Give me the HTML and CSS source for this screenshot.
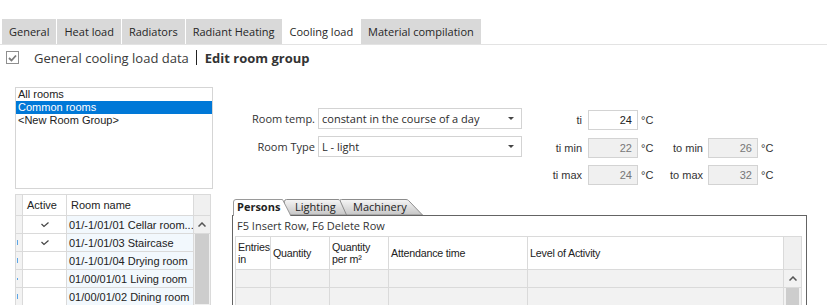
FILE: index.html
```html
<!DOCTYPE html>
<html lang="en">
  <head>
    <meta charset="UTF-8" />
    <meta name="viewport" content="width=device-width, initial-scale=1.0" />
    <title>Cooling load</title>
    <link rel="stylesheet" href="styles.css">
  </head>
  <body>
    <div class="top-tabs">
      <div class="top-tab">General</div>
      <div class="top-tab">Heat load</div>
      <div class="top-tab">Radiators</div>
      <div class="top-tab">Radiant Heating</div>
      <div class="top-tab active">Cooling load</div>
      <div class="top-tab">Material compilation</div>
    </div>

    <div class="title-row">
      <span class="checkbox">
        <svg width="9" height="8" viewBox="0 0 9 8"><polyline points="1,4 3.5,6.5 8,1.5" fill="none" stroke="#7a7a7a" stroke-width="1.8"/></svg>
      </span>
      <span class="title-text">General cooling load data</span>
      <span class="title-sep"></span>
      <span class="title-bold">Edit room group</span>
    </div>

    <div class="main">
      <div class="left-col">
        <div class="listbox">
          <div class="list-item">All rooms</div>
          <div class="list-item selected">Common rooms</div>
          <div class="list-item">&lt;New Room Group&gt;</div>
        </div>

        <table class="grid room-grid">
          <colgroup>
            <col class="w-rowhead">
            <col class="w-active">
            <col class="w-name">
            <col class="w-scroll">
          </colgroup>
          <tr class="head-row">
            <th class="row-head"></th>
            <th>Active</th>
            <th>Room name</th>
            <th class="scroll-cell"></th>
          </tr>
          <tr>
            <td class="row-head"></td>
            <td class="active-cell"><svg class="tick" width="8" height="6" viewBox="0 0 8 6"><polyline points="0.5,2 3,4.5 7.5,0.5" fill="none" stroke="#444" stroke-width="1.2"/></svg></td>
            <td class="name-cell">01/-1/01/01 Cellar room...</td>
            <td class="scroll-cell"><svg class="chevron" width="8" height="5" viewBox="0 0 8 5"><polyline points="0.5,4.5 4,1 7.5,4.5" fill="none" stroke="#555" stroke-width="1.5"/></svg></td>
          </tr>
          <tr>
            <td class="row-head"><span class="row-mark"></span></td>
            <td class="active-cell"><svg class="tick" width="8" height="6" viewBox="0 0 8 6"><polyline points="0.5,2 3,4.5 7.5,0.5" fill="none" stroke="#444" stroke-width="1.2"/></svg></td>
            <td class="name-cell">01/-1/01/03 Staircase</td>
            <td class="scroll-cell thumb-cell" rowspan="4"><div class="thumb"></div></td>
          </tr>
          <tr>
            <td class="row-head"><span class="row-mark"></span></td>
            <td class="active-cell"></td>
            <td class="name-cell">01/-1/01/04 Drying room</td>
          </tr>
          <tr>
            <td class="row-head"><span class="row-mark short"></span></td>
            <td class="active-cell"></td>
            <td class="name-cell">01/00/01/01 Living room</td>
          </tr>
          <tr>
            <td class="row-head"><span class="row-mark"></span></td>
            <td class="active-cell"></td>
            <td class="name-cell">01/00/01/02 Dining room</td>
          </tr>
        </table>
      </div>

      <div class="right-col">
        <div class="form-row">
          <div class="combo-grid">
            <label class="form-label">Room temp.</label>
            <div class="combo"><span>constant in the course of a day</span><i class="combo-arrow"></i></div>
            <label class="form-label">Room Type</label>
            <div class="combo"><span>L - light</span><i class="combo-arrow"></i></div>
          </div>

          <div class="temp-grid">
            <span class="temp-label">ti</span>
            <span class="temp-input">24</span>
            <span class="unit">°C</span>
            <span></span><span></span><span></span>

            <span class="temp-label">ti min</span>
            <span class="temp-input readonly">22</span>
            <span class="unit">°C</span>
            <span class="temp-label second">to min</span>
            <span class="temp-input readonly">26</span>
            <span class="unit">°C</span>

            <span class="temp-label">ti max</span>
            <span class="temp-input readonly">24</span>
            <span class="unit">°C</span>
            <span class="temp-label second">to max</span>
            <span class="temp-input readonly">32</span>
            <span class="unit">°C</span>
          </div>
        </div>

        <div class="sub-tabs">
          <div class="sub-tab persons">
            <svg class="sub-tab-shape" viewBox="0 0 58 17" preserveAspectRatio="none">
              <path d="M0.5 17V3Q0.5 0.5 3 0.5H49.5L57.5 17Z" fill="#ffffff" stroke="none"/>
              <path d="M0.5 17V3Q0.5 0.5 3 0.5H49.5L57.5 16" fill="none" stroke="#9a9a9a"/>
            </svg>
            <span class="sub-tab-label">Persons</span>
          </div>
          <div class="sub-tab lighting">
            <svg class="sub-tab-shape" viewBox="0 0 63 16" preserveAspectRatio="none">
              <defs>
                <linearGradient id="gLighting" x1="0" y1="0" x2="0" y2="1">
                  <stop offset="0" stop-color="#f6f6f6"/>
                  <stop offset="1" stop-color="#c6c6c6"/>
                </linearGradient>
              </defs>
              <path d="M0.5 16V2.5Q0.5 0.5 2.5 0.5H54Q55.5 0.5 56 1.5L62.5 16Z" fill="url(#gLighting)" stroke="#8c8c8c"/>
            </svg>
            <span class="sub-tab-label">Lighting</span>
          </div>
          <div class="sub-tab machinery">
            <svg class="sub-tab-shape" viewBox="0 0 84 16" preserveAspectRatio="none">
              <defs>
                <linearGradient id="gMachinery" x1="0" y1="0" x2="0" y2="1">
                  <stop offset="0" stop-color="#f6f6f6"/>
                  <stop offset="1" stop-color="#c6c6c6"/>
                </linearGradient>
              </defs>
              <path d="M0.5 16V2.5Q0.5 0.5 2.5 0.5H67Q68.5 0.5 69.5 1.5L83.5 16Z" fill="url(#gMachinery)" stroke="#8c8c8c"/>
            </svg>
            <span class="sub-tab-label">Machinery</span>
          </div>
        </div>

        <div class="panel">
          <div class="panel-hint">F5 Insert Row, F6 Delete Row</div>
          <table class="grid persons-grid">
            <colgroup>
              <col class="w-entries">
              <col class="w-qty">
              <col class="w-qtym">
              <col class="w-time">
              <col class="w-level">
              <col class="w-scroll2">
            </colgroup>
            <tr class="head-row">
              <th>Entries in</th>
              <th>Quantity</th>
              <th>Quantity per m²</th>
              <th>Attendance time</th>
              <th>Level of Activity</th>
              <th class="scroll-cell"></th>
            </tr>
            <tr class="data-row">
              <td></td><td></td><td></td><td></td><td></td>
              <td class="scroll-cell"><svg class="chevron" width="8" height="5" viewBox="0 0 8 5"><polyline points="0.5,4.5 4,1 7.5,4.5" fill="none" stroke="#555" stroke-width="1.5"/></svg></td>
            </tr>
            <tr class="data-row">
              <td></td><td></td><td></td><td></td><td></td>
              <td class="scroll-cell thumb-cell"><div class="thumb"></div></td>
            </tr>
          </table>
        </div>
      </div>
    </div>
  </body>
</html>
```

FILE: styles.css
```css
body {
  margin: 0;
  width: 827px;
  height: 305px;
  overflow: hidden;
  background-color: white;
  color: #333;
  font-family: "Open Sans", sans-serif;
}

/* top tab strip */
.top-tabs {
  display: flex;
  gap: 1px;
  margin-top: 19px;
  padding-left: 2px;
  height: 25px;
  border-bottom: 1px solid #e3e3e3;
}

.top-tab {
  background-color: #d9d9d9;
  padding: 0 7px;
  font-size: 11px;
  line-height: 26px;
  color: #262626;
}

.top-tab.active {
  background-color: white;
}

/* heading line */
.title-row {
  display: flex;
  align-items: center;
  height: 23px;
  margin-top: 1px;
  padding-left: 6px;
}

.checkbox {
  width: 11px;
  height: 11px;
  border: 1px solid #8f8f8f;
  display: flex;
  align-items: center;
  justify-content: center;
  margin-right: 15px;
}

.title-text {
  font-size: 13px;
  color: #3a3a3a;
}

.title-sep {
  width: 1px;
  height: 15px;
  background-color: #222;
  margin: 0 8px 0 7px;
}

.title-bold {
  font-size: 13px;
  font-weight: 700;
  color: #333;
}

/* main area */
.main {
  display: flex;
}

.left-col {
  width: 198px;
  margin-left: 15px;
  padding-top: 18px;
}

.listbox {
  height: 100px;
  border: 1px solid #d5d5d5;
  font-family: "Liberation Sans", sans-serif;
  font-size: 11px;
}

.list-item {
  height: 13px;
  line-height: 13px;
  padding-left: 2px;
  color: #222;
}

.list-item.selected {
  background-color: #0078d7;
  color: white;
}

/* data grids */
.grid {
  border-collapse: collapse;
  table-layout: fixed;
  font-family: "Liberation Sans", sans-serif;
  font-size: 11px;
  color: #222;
}

.grid th,
.grid td {
  border: 1px solid #dadada;
  padding: 0 2px;
  text-align: left;
  font-weight: 400;
  white-space: nowrap;
  overflow: hidden;
}

.room-grid {
  margin-top: 5px;
  width: 196px;
}

.room-grid tr {
  height: 18px;
}

.room-grid .head-row {
  height: 21px;
}

.w-rowhead { width: 7px; }
.w-active { width: 44px; }
.w-name { width: 127px; }
.w-scroll { width: 17px; }

.room-grid th {
  background-color: white;
  padding: 0 3px 0 4px;
}

.room-grid .row-head {
  background-color: #f3f3f3;
  padding: 0;
}

.row-mark {
  display: block;
  width: 1px;
  height: 5px;
  background-color: #5aa5e6;
  margin-left: 1px;
}

.row-mark.short {
  height: 2px;
}

.active-cell {
  background-color: white;
}

.tick {
  display: block;
  margin: 0 auto;
}

.name-cell {
  background-color: #f2f8fd;
}

.grid .scroll-cell {
  background-color: #f0f0f0;
  padding: 0;
  vertical-align: middle;
}

.chevron {
  display: block;
  margin: 0 auto;
}

.grid .thumb-cell {
  vertical-align: top;
}

.thumb {
  height: 70px;
  margin: 0 1px;
  background-color: #cdcdcd;
}

/* right column */
.right-col {
  margin-left: 19px;
  width: 575px;
}

.form-row {
  display: flex;
  align-items: flex-start;
  margin-top: 39px;
}

.combo-grid {
  display: grid;
  grid-template-columns: 86px 204px;
  row-gap: 7px;
  align-items: center;
}

.form-label {
  text-align: right;
  padding-right: 3px;
  font-size: 11px;
  color: #333;
}

.combo {
  height: 21px;
  box-sizing: border-box;
  border: 1px solid #d3d3d3;
  display: flex;
  align-items: center;
  justify-content: space-between;
  padding: 0 7px 0 3px;
  font-size: 11px;
  color: #2b2b2b;
}

.combo-arrow {
  width: 0;
  height: 0;
  border-left: 3px solid transparent;
  border-right: 3px solid transparent;
  border-top: 3px solid #444;
}

.temp-grid {
  display: grid;
  grid-template-columns: 48px 50px 27px 43px 50px auto;
  grid-auto-rows: 20px;
  row-gap: 7.5px;
  align-items: center;
  margin-left: 18px;
  margin-top: 2px;
  font-family: "Liberation Sans", sans-serif;
  font-size: 11px;
  color: #333;
}

.temp-label {
  text-align: right;
  padding-right: 6px;
}

.temp-label.second {
  padding-right: 5px;
}

.temp-input {
  height: 20px;
  box-sizing: border-box;
  border: 1px solid #d3d3d3;
  text-align: right;
  padding-right: 5px;
  line-height: 18px;
  color: #222;
}

.temp-input.readonly {
  background-color: #f0f0f0;
  color: #777;
}

.unit {
  padding-left: 3px;
}

/* lower tab control */
.sub-tabs {
  display: flex;
  align-items: flex-start;
  height: 16px;
  margin-top: 14px;
  padding-left: 1px;
  font-size: 11px;
  color: #222;
}

.sub-tab {
  position: relative;
  height: 16px;
  line-height: 16px;
  box-sizing: border-box;
}

.sub-tab-shape {
  position: absolute;
  left: 0;
  top: 0;
  width: 100%;
  height: 100%;
}

.sub-tab-label {
  position: relative;
}

.sub-tab.persons {
  width: 58px;
  height: 17px;
  padding-left: 4px;
  font-weight: 700;
  z-index: 3;
}

.sub-tab.lighting {
  width: 63px;
  margin-left: -7px;
  padding-left: 11px;
  z-index: 2;
}

.sub-tab.machinery {
  width: 84px;
  margin-left: -8px;
  padding-left: 14px;
  z-index: 1;
}

.panel {
  height: 89px;
  border: 1px solid #646464;
  border-bottom: none;
  padding: 0 4px 0 2px;
}

.panel-hint {
  height: 20px;
  line-height: 20px;
  padding-left: 2px;
  font-size: 11px;
  color: #333;
}

.persons-grid {
  width: 567px;
  font-size: 10.7px;
}

.w-entries { width: 35px; }
.w-qty { width: 59px; }
.w-qtym { width: 59px; }
.w-time { width: 139px; }
.w-level { width: 256px; }
.w-scroll2 { width: 18px; }

.persons-grid .head-row {
  height: 33px;
}

.persons-grid th {
  background-color: white;
  white-space: normal;
  line-height: 12px;
  vertical-align: middle;
  padding: 0 1px 0 2px;
  letter-spacing: -0.2px;
}

.persons-grid .data-row {
  height: 18px;
}

.persons-grid .data-row td {
  background-color: #f2f2f2;
}

.persons-grid .thumb {
  height: 17px;
  margin: 0 2px;
}
```
